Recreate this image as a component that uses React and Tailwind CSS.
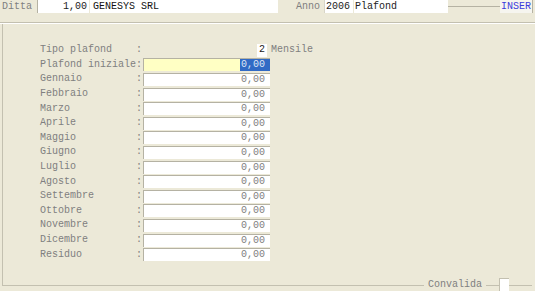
import React from "react";

const rows = [
  "Gennaio",
  "Febbraio",
  "Marzo",
  "Aprile",
  "Maggio",
  "Giugno",
  "Luglio",
  "Agosto",
  "Settembre",
  "Ottobre",
  "Novembre",
  "Dicembre",
  "Residuo",
];

function Field({ children, className = "" }) {
  return (
    <div
      className={
        "h-[13px] border-t border-l border-[#b5b2a3] flex items-center justify-end pr-[5px] " +
        className
      }
    >
      {children}
    </div>
  );
}

export default function App() {
  return (
    <div
      className="relative w-[535px] h-[291px] overflow-hidden bg-[#ECE9D8] text-[10px] leading-[12px] text-[#7f7f7f]"
      style={{ fontFamily: '"Liberation Mono", monospace' }}
    >
      {/* top bar */}
      <div className="flex h-[13px] items-stretch">
        <div className="w-[36px] pl-[2px] flex items-center">Ditta</div>
        <div className="w-[52px] ml-[1px] bg-white border-l border-[#b5b2a3] flex items-center justify-end pr-[2px] text-[#222]">
          1,00
        </div>
        <div className="w-[188px] ml-[1px] bg-white flex items-center pl-[3px] text-[#111]">
          GENESYS SRL
        </div>
        <div className="w-[46px] flex items-center justify-end pr-[4px]">Anno</div>
        <div className="w-[29px] bg-white border-l border-[#d8d5c8] flex items-center pl-[1px] text-[#222]">
          2006
        </div>
        <div className="w-[94px] ml-[1px] bg-white flex items-center pl-[1px] text-[#222]">
          Plafond
        </div>
        <div className="w-[52px] pt-[6px]">
          <div className="border-t border-[#b5b2a3]"></div>
        </div>
        <div className="w-[33px] bg-[#f6f5ef] flex items-center pl-[1px] text-[#3b3bdc] border-r border-[#b5b2a3]">
          INSER
        </div>
      </div>

      {/* separator */}
      <div className="mt-[9px] h-[2px] border-t border-[#c3c0b0] border-b border-b-white"></div>

      {/* main panel */}
      <div className="ml-[2px] mr-[3px] h-[262px] border-l border-b border-[#c3c0b0] pt-[19px] pl-[37px]">
        <div className="flex items-center h-[14.6px]">
          <div className="w-[103px] whitespace-pre">{"Tipo plafond    :"}</div>
          <div className="w-[114px]"></div>
          <div className="w-[10px] h-[13px] bg-white flex items-center justify-center text-[#222]">
            2
          </div>
          <div className="ml-[4px]">Mensile</div>
        </div>
        <div className="flex items-center h-[14.6px]">
          <div className="w-[103px] whitespace-pre">{"Plafond iniziale:"}</div>
          <Field className="w-[127px] bg-[#FFFFC4] !pr-0">
            <span className="bg-[#316AC5] text-[#dfe6f5] h-[12px] w-[30px] pl-[1px] flex items-center">
              0,00
            </span>
          </Field>
        </div>
        {rows.map((r) => (
          <div key={r} className="flex items-center h-[14.6px]">
            <div className="w-[103px] whitespace-pre">
              {r.padEnd(16, " ") + ":"}
            </div>
            <Field className="w-[127px] bg-white text-[#808080]">0,00</Field>
          </div>
        ))}
      </div>

      {/* Convalida */}
      <div className="absolute left-[424px] top-[278px] h-[13px] flex items-center bg-[#ECE9D8] px-[4px]">
        Convalida
      </div>
      <div className="absolute left-[499px] top-[278px] w-[10px] h-[13px] bg-white border-l border-t border-[#c3c0b0]"></div>
    </div>
  );
}
